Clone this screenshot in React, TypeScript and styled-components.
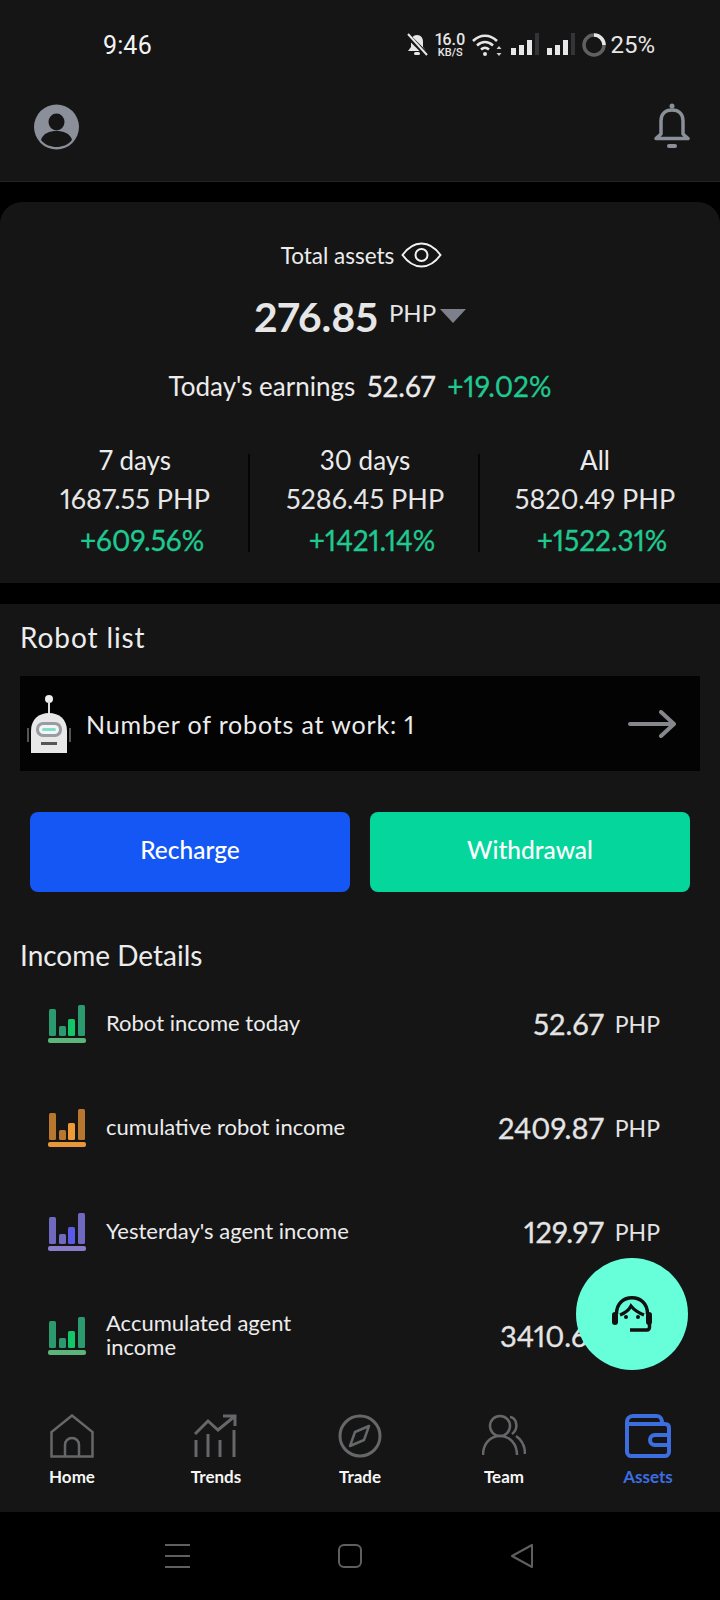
import styled, { createGlobalStyle } from "styled-components";

const GlobalStyle = createGlobalStyle`
  html, body {
    margin: 0;
    padding: 0;
    background: #000;
  }
  * {
    box-sizing: border-box;
  }
`;

const SURFACE = "#151516";
const GREEN = "#1fc98f";
const NAV_GREY = "#666769";

const Page = styled.div`
  position: relative;
  width: 720px;
  height: 1600px;
  overflow: hidden;
  display: flex;
  flex-direction: column;
  background: #000;
  color: #eaeaea;
  font-family: "Lato", "Liberation Sans", sans-serif;
  font-variant-numeric: proportional-nums;
`;

const TopArea = styled.header`
  height: 182px;
  background: ${SURFACE};
  border-bottom: 1px solid #232425;
  display: flex;
  flex-direction: column;
`;

const StatusBar = styled.div`
  height: 90px;
  padding: 0 65px 0 103px;
  display: flex;
  align-items: center;
  justify-content: space-between;
`;

const Clock = styled.span`
  font-family: "Roboto", sans-serif;
  font-size: 25px;
  color: #f2f2f2;
`;

const StatusIcons = styled.div`
  display: flex;
  align-items: center;
  gap: 7px;
`;

const Speed = styled.div`
  display: flex;
  flex-direction: column;
  align-items: center;
  font-family: "Roboto", sans-serif;
  font-weight: 500;
  color: #e6e6e6;
`;

const SpeedValue = styled.span`
  font-size: 16px;
  line-height: 14px;
`;

const SpeedUnit = styled.span`
  font-size: 11px;
  line-height: 11px;
`;

const Battery = styled.span`
  font-family: "Roboto", sans-serif;
  font-size: 24px;
  color: #e6e6e6;
  margin-left: -3px;
`;

const HeaderRow = styled.div`
  padding: 13px 30px 0 34px;
  display: flex;
  align-items: center;
  justify-content: space-between;
`;

const SummaryCard = styled.section`
  margin-top: 20px;
  height: 381px;
  background: ${SURFACE};
  border-radius: 22px 22px 0 0;
  display: flex;
  flex-direction: column;
  align-items: center;
  padding-top: 36px;
`;

const TotalLabel = styled.div`
  display: flex;
  align-items: center;
  gap: 7px;
  padding-left: 3px;
  font-size: 22.5px;
  height: 34px;
  color: #ececec;
`;

const TotalValue = styled.div`
  margin-top: 20px;
  display: flex;
  align-items: center;
  height: 48px;
  font-size: 41px;
  font-weight: 700;
  color: #e6e6e6;
`;

const TotalUnit = styled.span`
  font-size: 24px;
  font-weight: 400;
  margin: -8px 4px 0 11px;
`;

const Caret = styled.span`
  width: 0;
  height: 0;
  border-left: 13px solid transparent;
  border-right: 13px solid transparent;
  border-top: 14px solid #7d808a;
`;

const EarningsRow = styled.div`
  margin-top: 26px;
  height: 40px;
  display: flex;
  align-items: center;
  gap: 12px;
  font-size: 26px;
  color: #ececec;
`;

const EarningsAmount = styled.span`
  font-size: 28px;
  -webkit-text-stroke: 0.3px currentColor;
`;

const Gain = styled.span`
  font-size: 28px;
  color: ${GREEN};
  -webkit-text-stroke: 0.3px currentColor;
`;

const StatsGrid = styled.div`
  margin-top: 36px;
  width: 100%;
  padding: 0 10px 0 20px;
  display: grid;
  grid-template-columns: 230px 230px 230px;
`;

const StatColumn = styled.div<{ $divided?: boolean }>`
  position: relative;
  height: 100px;
  display: flex;
  flex-direction: column;
  align-items: center;
  font-size: 26px;

  &::after {
    content: "";
    display: ${(p) => (p.$divided ? "block" : "none")};
    position: absolute;
    right: 0;
    top: 12px;
    width: 2px;
    height: 98px;
    background: #050505;
  }
`;

const StatTitle = styled.div`
  height: 37px;
  line-height: 37px;
  color: #ececec;
`;

const StatAmount = styled.div`
  height: 40px;
  line-height: 40px;
  font-size: 27px;
  color: #e6e6e6;
`;

const StatGain = styled.div`
  height: 40px;
  line-height: 42px;
  padding-left: 14px;
  font-size: 28px;
  color: ${GREEN};
  -webkit-text-stroke: 0.3px currentColor;
`;

const Content = styled.main`
  margin-top: 21px;
  flex: 1;
  background: ${SURFACE};
  padding: 0 20px;
  display: flex;
  flex-direction: column;
`;

const SectionTitle = styled.h2`
  margin: 0;
  font-size: 28px;
  font-weight: 400;
  color: #ececec;
`;

const RobotTitle = styled(SectionTitle)`
  margin-top: 12px;
  height: 42px;
  line-height: 42px;
  letter-spacing: 0.9px;
`;

const RobotBar = styled.div`
  margin-top: 18px;
  height: 95px;
  background: #030303;
  display: flex;
  align-items: center;
  padding: 0 24px 0 7px;
`;

const RobotText = styled.div`
  margin-left: 15px;
  flex: 1;
  font-size: 25px;
  letter-spacing: 0.85px;
  color: #ececec;
`;

const ActionRow = styled.div`
  margin-top: 41px;
  padding: 0 10px;
  display: grid;
  grid-template-columns: 1fr 1fr;
  gap: 20px;
`;

const ActionButton = styled.button<{ $tone: string }>`
  height: 80px;
  border: none;
  border-radius: 8px;
  padding: 0 0 6px;
  background: ${(p) => p.$tone};
  color: #fff;
  font-family: inherit;
  font-size: 24.5px;
  font-weight: 500;
`;

const IncomeTitle = styled(SectionTitle)`
  margin-top: 43px;
  height: 40px;
  line-height: 40px;
`;

const IncomeList = styled.div`
  margin-top: -3px;
  padding: 0 40px 0 28px;
  display: flex;
  flex-direction: column;
`;

const IncomeRow = styled.div`
  height: 104px;
  display: flex;
  align-items: center;
  gap: 20px;
`;

const IncomeLabel = styled.div`
  flex: 1;
  margin-top: -2px;
  font-size: 22px;
  line-height: 24px;
  white-space: pre-line;
  color: #ececec;
`;

const IncomeValue = styled.div`
  margin-top: -2px;
  font-size: 29px;
  color: #e4e4e4;
  -webkit-text-stroke: 0.3px currentColor;
`;

const IncomeUnit = styled.span`
  font-size: 23px;
  margin-left: 11px;
  vertical-align: 2px;
  -webkit-text-stroke: 0;
`;

const Fab = styled.div`
  position: absolute;
  left: 576px;
  top: 1258px;
  width: 112px;
  height: 112px;
  border-radius: 50%;
  background: #66ffd9;
  display: flex;
  align-items: center;
  justify-content: center;
`;

const BottomNav = styled.nav`
  height: 102px;
  background: ${SURFACE};
  display: grid;
  grid-template-columns: repeat(5, 144px);
  padding-top: 4px;
`;

const NavItem = styled.div<{ $active?: boolean }>`
  display: flex;
  flex-direction: column;
  align-items: center;
  color: ${(p) => (p.$active ? "#3d6ee0" : "#f5f5f5")};
  font-size: 17px;
  font-weight: 700;
`;

const NavLabel = styled.span`
  margin-top: 8px;
`;

const SystemBar = styled.div`
  height: 88px;
  background: #000;
  display: flex;
  align-items: flex-start;
  gap: 148px;
  padding: 32px 0 0 165px;
`;

function BellOffIcon() {
  return (
    <svg width="22" height="24" viewBox="0 0 22 24">
      <path d="M11 2c4 0 6 3 6 7v5l3 4H2l3-4V9c0-4 2-7 6-7z" fill="#e6e6e6" />
      <rect x="8" y="19" width="6" height="3" rx="1.5" fill="#e6e6e6" />
      <path d="M1 2l20 20" stroke={SURFACE} strokeWidth="5" />
      <path d="M2 1l19 21" stroke="#e6e6e6" strokeWidth="2" />
    </svg>
  );
}

function WifiIcon() {
  return (
    <svg width="31" height="24" viewBox="0 0 31 24" fill="none" stroke="#e6e6e6" strokeWidth="2.6">
      <path d="M1 8c7-7 17-7 24 0" />
      <path d="M5 12.500c5-4.500 11-4.500 16 0" />
      <path d="M9 16.500c3-2.500 5-2.500 8 0" />
      <circle cx="13" cy="21" r="2" fill="#e6e6e6" stroke="none" />
      <path d="M27 13l-2.500 3h5zM27 23l-2.500-3h5z" fill="#cfcfcf" stroke="none" />
    </svg>
  );
}

function SignalIcon() {
  return (
    <svg width="29" height="24" viewBox="0 0 29 24">
      <rect x="1" y="15" width="5" height="7" fill="#e6e6e6" />
      <rect x="9" y="12" width="5" height="10" fill="#e6e6e6" />
      <rect x="17" y="7" width="5" height="15" fill="#e6e6e6" />
      <rect x="25" y="0" width="4" height="22" fill="#333435" />
    </svg>
  );
}

function RingIcon() {
  return (
    <svg width="24" height="24" viewBox="0 0 24 24" fill="none" strokeWidth="3.500">
      <circle cx="12" cy="12" r="10" stroke="#5f6062" />
      <path d="M12 2a10 10 0 0 1 10 10" stroke="#e6e6e6" />
    </svg>
  );
}

function AvatarIcon() {
  return (
    <svg width="45" height="46" viewBox="0 0 45 46">
      <circle cx="22.500" cy="23" r="22.500" fill="#8b8f99" />
      <ellipse cx="22.500" cy="18" rx="8" ry="8.500" fill={SURFACE} />
      <path d="M7 36c2-7 9-9 15.500-9S36 29 38 36c-4 5-10 7-15.500 7S11 41 7 36z" fill={SURFACE} />
    </svg>
  );
}

function BellIcon() {
  return (
    <svg width="36" height="48" viewBox="0 0 36 48" fill="none" stroke="#8b8f99" strokeWidth="3.500">
      <circle cx="18" cy="3" r="2.500" fill="#8b8f99" stroke="none" />
      <path d="M7 31V18c0-7 4-11 11-11s11 4 11 11v13l5 4.500H2z" strokeLinejoin="round" />
      <rect x="13" y="41" width="10" height="4" rx="2" fill="#8b8f99" stroke="none" />
    </svg>
  );
}

function EyeIcon() {
  return (
    <svg width="41" height="26" viewBox="0 0 41 26" fill="none" stroke="#f2f2f2" strokeWidth="2">
      <path d="M1.500 13C8 4 14 1.500 20.500 1.500S33 4 39.500 13C33 22 27 24.500 20.500 24.500S8 22 1.500 13z" />
      <circle cx="20.500" cy="13" r="6" />
    </svg>
  );
}

function RobotIcon() {
  return (
    <svg width="44" height="58" viewBox="0 0 44 58">
      <circle cx="22" cy="4" r="4" fill="#eeeeee" />
      <rect x="21" y="6" width="2" height="13" fill="#dddddd" />
      <path d="M4 58V36C4 24 12 18 22 18s18 6 18 18v22z" fill="#e8e8e8" />
      <path d="M0 33h2v14H0zM42 33h2v14h-2z" fill="#555" />
      <rect x="9" y="27" width="26" height="15" rx="7" fill="#9a9ca3" />
      <rect x="12" y="30" width="20" height="9" rx="4.500" fill="#f4f4f4" />
      <rect x="15" y="33" width="14" height="3" rx="1.500" fill="#7fe0cc" />
      <rect x="14" y="47" width="16" height="3" fill="#555" />
    </svg>
  );
}

function ArrowIcon() {
  return (
    <svg width="48" height="28" viewBox="0 0 48 28" fill="none" stroke="#85878c" strokeWidth="4" strokeLinecap="round" strokeLinejoin="round">
      <path d="M2 14h43M33 2l13 12-13 12" />
    </svg>
  );
}

function BarsIcon({ outer, inner, base }: { outer: string; inner: string; base: string }) {
  return (
    <svg width="38" height="38" viewBox="0 0 38 38">
      <rect x="1" y="4" width="7" height="27" rx="1.500" fill={outer} />
      <rect x="11" y="21" width="7" height="10" rx="1.500" fill={outer} />
      <rect x="20" y="14" width="7" height="17" rx="1.500" fill={inner} />
      <rect x="30" y="0" width="7" height="31" rx="1.500" fill={outer} />
      <rect x="0" y="33" width="38" height="5" rx="2" fill={base} />
    </svg>
  );
}

function AgentIcon() {
  return (
    <svg width="40" height="36" viewBox="0 0 40 36" fill="none" stroke="#111" strokeWidth="3.500">
      <path d="M4.500 18C4.500 7 12 1.800 20 1.800S35.500 7 35.500 18" />
      <path d="M8 19C13 17 17 14 19 10c4 5 8 7 13 9" strokeWidth="3.200" />
      <rect x="0" y="16" width="6" height="13" rx="3" fill="#111" stroke="none" />
      <rect x="34" y="16" width="6" height="13" rx="3" fill="#111" stroke="none" />
      <circle cx="14" cy="21" r="2" fill="#111" stroke="none" />
      <circle cx="26" cy="21" r="2" fill="#111" stroke="none" />
      <path d="M37.500 28v3c0 1.500-1 3-2.500 3H18" />
    </svg>
  );
}

function HomeIcon() {
  return (
    <svg width="44" height="44" viewBox="0 0 44 44" fill="none" stroke={NAV_GREY} strokeWidth="2.500">
      <path d="M1.500 42.500V18L22 1.500 42.500 18v24.500z" />
      <path d="M15 42.500V31c0-4 3-7 7-7s7 3 7 7v11.500" />
    </svg>
  );
}

function TrendsIcon() {
  return (
    <svg width="44" height="44" viewBox="0 0 44 44" fill="none" stroke={NAV_GREY} strokeWidth="3">
      <path d="M1 20L14 7l10 9L41 2M29 2h12v10" />
      <path d="M2 26v17M14 20v23M26 26v17M40 16v27" />
    </svg>
  );
}

function CompassIcon() {
  return (
    <svg width="44" height="44" viewBox="0 0 44 44" fill="none" stroke={NAV_GREY} strokeWidth="3">
      <circle cx="22" cy="22" r="20" />
      <path d="M31 12l-14 6-5 14 14-6z" strokeWidth="2.500" strokeLinejoin="round" />
    </svg>
  );
}

function TeamIcon() {
  return (
    <svg width="44" height="44" viewBox="0 0 44 44" fill="none" stroke={NAV_GREY} strokeWidth="2.500">
      <circle cx="18" cy="12" r="10" />
      <path d="M1 41c0-11 7-19 17-19s17 8 17 19" />
      <path d="M28 3c7 1 9 12 2 17M34 22c6 4 9 10 9 18" />
    </svg>
  );
}

function WalletIcon() {
  return (
    <svg width="46" height="44" viewBox="0 0 46 44" fill="none" stroke="#3d6ee0" strokeWidth="4">
      <path d="M2 10V8c0-3 2-6 6-6h24c3 0 5 3 5 7v1" />
      <path d="M2 10h38c2 0 4 1 4 4v24c0 2-2 4-4 4H6c-2 0-4-2-4-4z" />
      <path d="M44 21H30c-3 0-5 2-5 5s2 5 5 5h14" />
    </svg>
  );
}

const stats = [
  { title: "7 days", amount: "1687.55", gain: "+609.56%" },
  { title: "30 days", amount: "5286.45", gain: "+1421.14%" },
  { title: "All", amount: "5820.49", gain: "+1522.31%" },
];

const greenBars = { outer: "#2b9a6e", inner: "#12c768", base: "#5cb67c" };

const incomes = [
  { label: "Robot income today", value: "52.67", bars: greenBars },
  {
    label: "cumulative robot income",
    value: "2409.87",
    bars: { outer: "#b8772e", inner: "#f09a35", base: "#e8963a" },
  },
  {
    label: "Yesterday's agent income",
    value: "129.97",
    bars: { outer: "#7069c0", inner: "#5a5ae8", base: "#8a7cc8" },
  },
  { label: "Accumulated agent\nincome", value: "3410.62", bars: greenBars },
];

const navItems = [
  { label: "Home", icon: <HomeIcon /> },
  { label: "Trends", icon: <TrendsIcon /> },
  { label: "Trade", icon: <CompassIcon /> },
  { label: "Team", icon: <TeamIcon /> },
  { label: "Assets", icon: <WalletIcon />, active: true },
];

function App() {
  return (
    <Page>
      <GlobalStyle />
      <TopArea>
        <StatusBar>
          <Clock>9:46</Clock>
          <StatusIcons>
            <BellOffIcon />
            <Speed>
              <SpeedValue>16.0</SpeedValue>
              <SpeedUnit>KB/S</SpeedUnit>
            </Speed>
            <WifiIcon />
            <SignalIcon />
            <SignalIcon />
            <RingIcon />
            <Battery>25%</Battery>
          </StatusIcons>
        </StatusBar>
        <HeaderRow>
          <AvatarIcon />
          <BellIcon />
        </HeaderRow>
      </TopArea>

      <SummaryCard>
        <TotalLabel>
          Total assets
          <EyeIcon />
        </TotalLabel>
        <TotalValue>
          276.85
          <TotalUnit>PHP</TotalUnit>
          <Caret />
        </TotalValue>
        <EarningsRow>
          <span>Today's earnings</span>
          <EarningsAmount>52.67</EarningsAmount>
          <Gain>+19.02%</Gain>
        </EarningsRow>
        <StatsGrid>
          {stats.map((stat, i) => (
            <StatColumn key={stat.title} $divided={i < 2}>
              <StatTitle>{stat.title}</StatTitle>
              <StatAmount>{stat.amount} PHP</StatAmount>
              <StatGain>{stat.gain}</StatGain>
            </StatColumn>
          ))}
        </StatsGrid>
      </SummaryCard>

      <Content>
        <RobotTitle>Robot list</RobotTitle>
        <RobotBar>
          <RobotIcon />
          <RobotText>Number of robots at work: 1</RobotText>
          <ArrowIcon />
        </RobotBar>
        <ActionRow>
          <ActionButton $tone="#1557f5">Recharge</ActionButton>
          <ActionButton $tone="#05d69c">Withdrawal</ActionButton>
        </ActionRow>
        <IncomeTitle>Income Details</IncomeTitle>
        <IncomeList>
          {incomes.map((income) => (
            <IncomeRow key={income.label}>
              <BarsIcon {...income.bars} />
              <IncomeLabel>{income.label}</IncomeLabel>
              <IncomeValue>
                {income.value}
                <IncomeUnit>PHP</IncomeUnit>
              </IncomeValue>
            </IncomeRow>
          ))}
        </IncomeList>
      </Content>

      <BottomNav>
        {navItems.map((item) => (
          <NavItem key={item.label} $active={item.active}>
            {item.icon}
            <NavLabel>{item.label}</NavLabel>
          </NavItem>
        ))}
      </BottomNav>

      <SystemBar>
        <svg width="25" height="24" viewBox="0 0 25 24" stroke="#5f5f5f" strokeWidth="2">
          <path d="M0 1h25M0 12h25M0 23h25" />
        </svg>
        <svg width="24" height="24" viewBox="0 0 24 24" fill="none" stroke="#5f5f5f" strokeWidth="2">
          <rect x="1" y="1" width="22" height="22" rx="5" />
        </svg>
        <svg width="24" height="24" viewBox="0 0 24 24" fill="none" stroke="#5f5f5f" strokeWidth="2" strokeLinejoin="round">
          <path d="M2 12L22 1v22z" />
        </svg>
      </SystemBar>

      <Fab>
        <AgentIcon />
      </Fab>
    </Page>
  );
}

export default App;
